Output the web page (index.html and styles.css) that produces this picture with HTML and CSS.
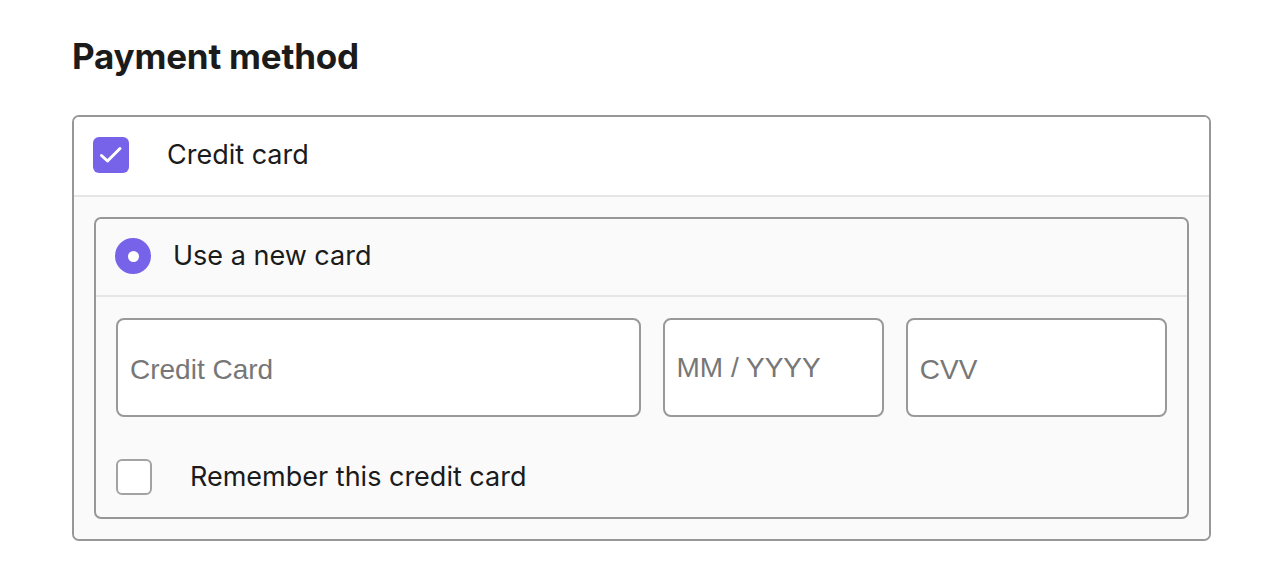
FILE: index.html
```html
<!DOCTYPE html>
<html lang="en">
<head>
    <meta charset="UTF-8">
    <meta name="viewport" content="width=device-width, initial-scale=1.0">
    <title>Payment method</title>
    <link rel="stylesheet" href="styles.css">
</head>
<body>

    <div class="page">
        <h1 class="title">Payment method</h1>

        <!-- Payment box -->
        <div class="box">
            <div class="box-header">
                <span class="check checked">
                    <svg width="36" height="36" viewBox="0 0 36 36"><path d="M8.5 18.5 L14.5 24 L27 11.5" fill="none" stroke="#fff" stroke-width="3" stroke-linecap="round" stroke-linejoin="round"/></svg>
                </span>
                <span class="label">Credit card</span>
            </div>

            <div class="box-body">
                <div class="card-box">
                    <div class="card-header">
                        <span class="radio"></span>
                        <span class="label">Use a new card</span>
                    </div>

                    <div class="card-body">
                        <div class="fields">
                            <input type="text" class="field" placeholder="Credit Card">
                            <input type="text" class="field field-date" placeholder="MM / YYYY">
                            <input type="text" class="field" placeholder="CVV">
                        </div>

                        <div class="remember">
                            <span class="check"></span>
                            <span class="label">Remember this credit card</span>
                        </div>
                    </div>
                </div>
            </div>
        </div>
    </div>

</body>
</html>
```

FILE: styles.css
```css
body {
    margin: 0;
    padding: 0;
    background-color: #ffffff;
    font-family: Inter, "Noto Sans", sans-serif;
    color: #1b1b1b;
}

.page {
    width: 1139px;
    padding: 33px 0 0 72px;
}

.title {
    margin: 0 0 36px 0;
    font-size: 35px;
    font-weight: 700;
    line-height: 46px;
    letter-spacing: -0.2px;
    color: #1b1b1b;
}

.box {
    border: 2px solid #979797;
    border-radius: 7px;
    overflow: hidden;
}

.box-header {
    box-sizing: border-box;
    display: flex;
    align-items: center;
    height: 80px;
    padding: 0 0 3px 19px;
    background-color: #ffffff;
    border-bottom: 2px solid #e6e6e6;
}

.label {
    font-size: 27px;
    line-height: 32px;
    color: #1b1b1b;
}

.box-header .label {
    margin-left: 38px;
}

/* Checkboxes */
.check {
    display: flex;
    align-items: center;
    justify-content: center;
    width: 32px;
    height: 32px;
    border: 2px solid #a3a3a3;
    border-radius: 6px;
    background-color: #ffffff;
    flex-shrink: 0;
}

.check.checked {
    width: 36px;
    height: 36px;
    border: none;
    background-color: #7763e9;
}

.box-body {
    padding: 20px 20px 20px 20px;
    background-color: #fafafa;
}

.card-box {
    border: 2px solid #979797;
    border-radius: 7px;
    overflow: hidden;
}

.card-header {
    box-sizing: border-box;
    display: flex;
    align-items: center;
    height: 78px;
    padding: 0 0 2px 19px;
    border-bottom: 2px solid #e6e6e6;
}

.radio {
    width: 36px;
    height: 36px;
    border-radius: 50%;
    background-color: #7763e9;
    flex-shrink: 0;
    display: flex;
    align-items: center;
    justify-content: center;
}

.radio::after {
    content: "";
    width: 11px;
    height: 11px;
    border-radius: 50%;
    background-color: #ffffff;
}

.card-header .label {
    margin-left: 22px;
}

.card-body {
    padding: 21px 20px 22px 20px;
}

.fields {
    display: grid;
    grid-template-columns: 524fr 221fr 261fr;
    gap: 22px;
}

.field {
    box-sizing: border-box;
    height: 99px;
    width: 100%;
    margin: 0;
    padding: 4px 12px 0 12px;
    border: 2px solid #999999;
    border-radius: 8px;
    background-color: #ffffff;
    font-family: "Liberation Sans", Arial, sans-serif;
    font-size: 28px;
    color: #1b1b1b;
    outline: none;
}

.field::placeholder {
    color: #777777;
}

.field-date {
    padding-top: 0;
}

.remember {
    display: flex;
    align-items: center;
    margin-top: 42px;
}

.remember .label {
    margin-left: 38px;
}
```
